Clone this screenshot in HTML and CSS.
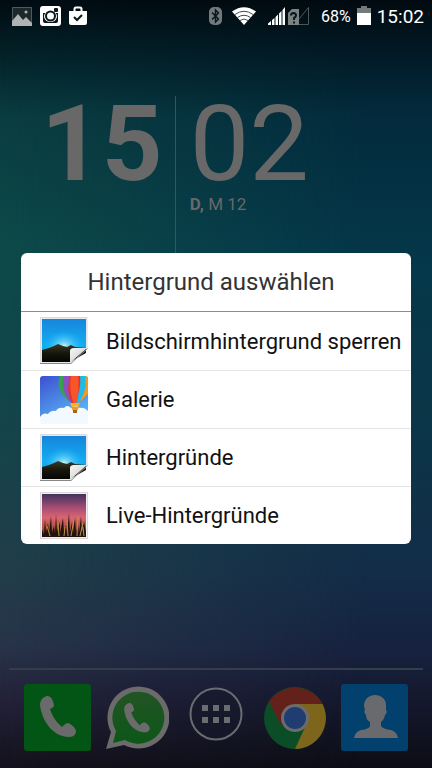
FILE: index.html
```html
<!DOCTYPE html>
<html lang="de">
<head>
    <meta charset="UTF-8">
    <meta name="viewport" content="width=device-width, initial-scale=1.0">
    <title>Hintergrund auswählen</title>
    <link rel="stylesheet" href="styles.css">
</head>
<body>
    <!-- shared drawings -->
    <svg class="defs" width="0" height="0" aria-hidden="true">
      <defs>
        <linearGradient id="sky" x1="0" y1="0" x2="0" y2="1">
          <stop offset="0" stop-color="#1785dc"/>
          <stop offset="0.6" stop-color="#12adf3"/>
          <stop offset="1" stop-color="#1fa3d6"/>
        </linearGradient>
        <radialGradient id="sun" cx="0.5" cy="0.5" r="0.5">
          <stop offset="0" stop-color="#d4f2ee"/>
          <stop offset="0.25" stop-color="#7fdcf8" stop-opacity="0.8"/>
          <stop offset="1" stop-color="#19b3f7" stop-opacity="0"/>
        </radialGradient>
        <linearGradient id="hill" x1="0" y1="0" x2="0" y2="1">
          <stop offset="0" stop-color="#3a3c22"/>
          <stop offset="0.5" stop-color="#17170d"/>
          <stop offset="1" stop-color="#050505"/>
        </linearGradient>
        <linearGradient id="fold" x1="0" y1="0" x2="1" y2="1">
          <stop offset="0" stop-color="#f8f8f8"/>
          <stop offset="0.6" stop-color="#d9d9d9"/>
          <stop offset="1" stop-color="#bbb"/>
        </linearGradient>
        <linearGradient id="gallery-sky" x1="0" y1="0" x2="0.6" y2="1">
          <stop offset="0" stop-color="#3c4fd0"/>
          <stop offset="1" stop-color="#58b4f4"/>
        </linearGradient>
        <linearGradient id="dusk" x1="0" y1="0" x2="0" y2="1">
          <stop offset="0" stop-color="#40305c"/>
          <stop offset="0.3" stop-color="#a04c73"/>
          <stop offset="0.55" stop-color="#dc6470"/>
          <stop offset="0.8" stop-color="#a8503f"/>
          <stop offset="1" stop-color="#3a2018"/>
        </linearGradient>
        <linearGradient id="wa-green" x1="0" y1="0" x2="0" y2="1">
          <stop offset="0" stop-color="#235425"/>
          <stop offset="1" stop-color="#0c5717"/>
        </linearGradient>
        <symbol id="wallpaper" viewBox="0 0 48 48">
          <path d="M0.500 0.500H47V32L31 46.500H0.500Z" fill="#e9e9e9" stroke="#dcdcdc"/>
          <path d="M0 46.500H31" stroke="#888"/>
          <path d="M2 2H46V32H30V45H2Z" fill="url(#sky)"/>
          <ellipse cx="24" cy="29" rx="20" ry="16" fill="url(#sun)"/>
          <path d="M2 45V33L9 31L14 29L18 27L23 29L27 30L31 28L35 30L46 31V36L30 45Z" fill="url(#hill)"/>
          <path d="M30 46V34Q30 31 34 31L47 31Z" fill="url(#fold)"/>
          <path d="M31 46.500L47.500 31.500" stroke="#999"/>
        </symbol>
        <symbol id="handset" viewBox="0 0 36 42">
          <path d="M7 0C3 1 0 4 0 9C2 26 14 41 29 41C34 41 36 38 36 35C35 31 31 28 28 27C26 27 24 29 22 31C17 27 12 20 10 13C13 12 14 10 14 9C13 5 12 2 10 1C9 0 8 0 7 0Z"/>
        </symbol>
      </defs>
    </svg>

    <header class="statusbar">
      <div class="group notices">
        <svg width="20" height="20" viewBox="0 0 20 20" aria-label="Bild">
          <path d="M0 1H20V20H0Z" fill="#1c282b"/>
          <path d="M0.500 18V1.500H19.500V18" fill="none" stroke="#50595c"/>
          <path d="M0 20V15L6 8L11 14L14 11L20 17V20Z" fill="#b0b3b4"/>
          <circle cx="14" cy="6" r="1.500" fill="#b0b3b4"/>
        </svg>
        <svg width="21" height="20" viewBox="0 0 21 20" aria-label="Instagram">
          <rect width="21" height="20" rx="3" fill="#fff"/>
          <path d="M3 7H5.500A5.500 5.500 0 0 0 10.500 16A5.500 5.500 0 0 0 15.500 7H18V15Q18 17 16 17H5Q3 17 3 15Z" fill="#07191e"/>
          <circle cx="10.500" cy="10" r="6" fill="#fff"/>
          <circle cx="10.500" cy="10" r="4.500" fill="none" stroke="#07191e" stroke-width="2"/>
          <rect x="14" y="2" width="4" height="4" rx="1" fill="#07191e"/>
        </svg>
        <svg width="18" height="20" viewBox="0 0 18 20" aria-label="Play Store">
          <path d="M5.500 5V3Q5.500 1.500 7 1.500H11Q12.500 1.500 12.500 3V5" fill="none" stroke="#fff" stroke-width="2"/>
          <path d="M0 5H18V17Q18 19 16 19H2Q0 19 0 17Z" fill="#fff"/>
          <path d="M5 11L8 14L13 9" fill="none" stroke="#07191e" stroke-width="2"/>
        </svg>
      </div>
      <div class="group system">
        <svg width="13" height="20" viewBox="0 0 13 20" aria-label="Bluetooth">
          <rect y="1" width="13" height="18" rx="5" fill="#737a7c"/>
          <path d="M3 6.500L9.500 13L6.500 16V4L9.500 7L3 13.500" fill="none" stroke="#07191e" stroke-width="1.500"/>
        </svg>
        <svg class="wifi" width="24" height="20" viewBox="0 0 24 20" aria-label="WLAN">
          <path d="M0 5.500Q12 -3 24 5.500L12 19Z" fill="#fff"/>
          <path d="M3 8.500Q12 2 21 8.500M5.500 11.500Q12 7 18.500 11.500M8 14.500Q12 11.500 16 14.500" fill="none" stroke="#3d4b4f" stroke-width="1"/>
        </svg>
        <svg class="signal" width="41" height="20" viewBox="0 0 41 20" aria-label="Signal">
          <path d="M0 19V17.500L3 15V19ZM4 19V14L6.500 12V19ZM7.500 19V11L10 8.500V19ZM11 19V7.500L13.500 5V19ZM14.500 19V4L17 1V19Z" fill="#fff"/>
          <path d="M20 19V7L24 3H31V19Z" fill="#7c8385"/>
          <path d="M31 18.500H40.500V1.500L31 13" fill="none" stroke="#4b575a"/>
          <path d="M23 9.500Q23 7 25.500 7Q28 7 28 9.500Q28 11 26 12V14M26 15.500V17.500" fill="none" stroke="#07191e" stroke-width="2"/>
        </svg>
        <span class="percent">68%</span>
        <svg width="14" height="20" viewBox="0 0 14 20" aria-label="Akku">
          <path d="M4 0H10V2H14V8H0V2H4Z" fill="#737a7c"/>
          <path d="M0 7H14V19H0Z" fill="#fff"/>
        </svg>
        <time class="time">15:02</time>
      </div>
    </header>

    <main class="home">
      <section class="clock">
        <div class="hours">15</div>
        <div class="right">
          <div class="minutes">02</div>
          <div class="date"><b>D,</b> M 12</div>
        </div>
      </section>
    </main>

    <nav class="dock">
      <a href="#telefon" aria-label="Telefon">
        <svg width="67" height="67" viewBox="0 0 67 67">
          <rect width="67" height="67" rx="3" fill="#035516"/>
          <use href="#handset" x="16" y="12" width="36" height="42" fill="#6a6a6a"/>
        </svg>
      </a>
      <a href="#whatsapp" aria-label="WhatsApp">
        <svg width="64" height="64" viewBox="0 0 64 64">
          <path d="M1 63L6 46A31 31 0 1 1 19 59Z" fill="#6b6b6b"/>
          <path d="M8 57L11 45A26 26 0 1 1 20 54Z" fill="url(#wa-green)"/>
          <use href="#handset" x="16" y="17" width="32" height="30" fill="#6b6b6b"/>
        </svg>
      </a>
      <a href="#apps" aria-label="Apps">
        <svg class="apps" width="54" height="54" viewBox="0 0 54 54">
          <circle cx="27" cy="27" r="25.500" fill="#15182a" fill-opacity="0.5" stroke="#6a6c72" stroke-width="2"/>
          <path d="M13 18h6v6h-6zM24 18h6v6h-6zM35 18h6v6h-6zM13 30h6v6h-6zM24 30h6v6h-6zM35 30h6v6h-6z" fill="#6a6c70"/>
        </svg>
      </a>
      <a href="#chrome" aria-label="Chrome">
        <svg width="62" height="62" viewBox="0 0 62 62">
          <circle cx="31" cy="31" r="31" fill="#0a4d26"/>
          <path d="M31 17H58.500A31 31 0 0 1 31 62L42 38Z" fill="#7d651c"/>
          <path d="M5 15A31 31 0 0 1 58.500 17H31L17 38Z" fill="#64201a"/>
          <circle cx="31" cy="31" r="14" fill="#6b6b6b"/>
          <circle cx="31" cy="31" r="11" fill="#203d71"/>
        </svg>
      </a>
      <a href="#kontakte" aria-label="Kontakte">
        <svg width="67" height="67" viewBox="0 0 67 67">
          <rect width="67" height="67" rx="3" fill="#02406e"/>
          <path d="M34 11C41 11 46 16 45 23L45 26Q47 28 44 31Q43 36 40 38V42Q42 45 50 46Q56 48 57 54H13Q14 48 20 46Q28 45 29 42V38Q25 36 25 31Q22 28 24 26L23 22C23 16 27 11 34 11Z" fill="#686a6d"/>
        </svg>
      </a>
    </nav>

    <div class="overlay">
      <div class="dialog" role="dialog" aria-labelledby="dialog-title">
        <h1 id="dialog-title">Hintergrund auswählen</h1>
        <ul>
          <li><button type="button">
            <svg width="48" height="48" aria-hidden="true"><use href="#wallpaper"/></svg>
            Bildschirmhintergrund sperren
          </button></li>
          <li><button type="button">
            <svg width="48" height="48" viewBox="0 0 48 48" aria-hidden="true">
              <path d="M0 44V3Q0 0 3 0H45Q48 0 48 3V44Z" fill="url(#gallery-sky)"/>
              <path d="M20 0C16 10 20 19 32 27L34 26L28 0Z" fill="#35a34b"/>
              <path d="M24 0C21 10 24 20 32 28L34 27L32 0Z" fill="#8a4fc0"/>
              <path d="M30 0C27 10 28 21 33 28H36L42 0Z" fill="#e63223"/>
              <path d="M31 0C29 10 31 21 34 28H36Q40 12 38 0Z" fill="#f8552a"/>
              <path d="M40 0C41 10 39 20 36 28L39 26C45 16 47 8 46 0Z" fill="#1dbbe8"/>
              <path d="M45 0Q48 0 48 3V18L38 27C45 18 47 9 45 0Z" fill="#f19a20"/>
              <path d="M30 27H40L38 32H32Z" fill="#f8b32c"/>
              <path d="M0 46V41Q3 36 8 38Q11 34 16 35Q18 31 24 32Q27 28 31 32Q36 29 40 32Q44 31 48 35V46Q48 48 46 48H2Q0 48 0 46Z" fill="#f2faff"/>
              <path d="M31 31H39L37 35H33Z" fill="#ef9b21"/>
              <path d="M33 34H37V37H33Z" fill="#a6631c"/>
            </svg>
            Galerie
          </button></li>
          <li><button type="button">
            <svg width="48" height="48" aria-hidden="true"><use href="#wallpaper"/></svg>
            Hintergründe
          </button></li>
          <li><button type="button">
            <svg width="48" height="48" viewBox="0 0 48 48" aria-hidden="true">
              <rect x="0.500" y="0.500" width="47" height="46" fill="#eee" stroke="#dcd6d6"/>
              <rect x="2" y="2" width="44" height="43" fill="url(#dusk)"/>
              <path d="M2 45V38L4 43L5 27L6 41L8 31L9 42L11 24L12 41L14 34L15 42L16 22L17 40L20 30L20 42L23 26L24 41L26 33L27 43L29 21L30 41L32 30L33 42L35 25L36 41L38 32L39 42L41 24L42 41L44 29L46 41V45Z" fill="#1f120f"/>
              <path d="M19 44L18 31M28 44L27 28M31 44L34 27M37 44L38 24M40 44L43 31M44 44L43 35M24 44L25 35M10 44L7 34" fill="none" stroke="#bd923a"/>
            </svg>
            Live-Hintergründe
          </button></li>
        </ul>
      </div>
    </div>
</body>
</html>
```

FILE: styles.css
```css
*{
  box-sizing: border-box;
}
body{
  margin: 0;
  min-height: 100vh;
  display: flex;
  flex-direction: column;
  position: relative;
  font-family: Roboto, "Noto Sans", sans-serif;
  color: white;
  background: linear-gradient(#010c12, #04252b 8%, #0a3d40 15%, #0e4a49 32%, #12464a 52%, #223d49 75%, #283449 84%, #23223a 91%, #14121c);
}
/* cooler right side of the wallpaper, fading in from the left */
body::before{
  content: "";
  position: absolute;
  inset: 0;
  z-index: -1;
  background: linear-gradient(#010a10, #021c29 8%, #032b3d 15%, #04384a 35%, #0b3648 55%, #132c47 75%, #17213e 85%, #14172b 92%, #0c0d15);
  -webkit-mask-image: linear-gradient(to right, transparent, black 85%);
  mask-image: linear-gradient(to right, transparent, black 85%);
}
.defs{
  position: absolute;
}
svg{
  display: block;
  flex: none;
}

.statusbar{
  height: 32px;
  padding: 0 8px 0 12px;
  display: flex;
  justify-content: space-between;
  align-items: center;
}
.group{
  display: flex;
  align-items: center;
  gap: 8px;
}
.system{
  gap: 6px;
}
.wifi{
  margin: 0 6px 0 4px;
}
.signal{
  margin-right: 6px;
}
.percent{
  font-size: 16px;
}
.time{
  font-size: 19px;
}

.home{
  flex: 1;
  padding: 64px 41px 0;
}
.clock{
  display: flex;
  color: #686868;
}
.hours, .minutes{
  font-size: 106px;
  line-height: 96px;
}
.hours{
  font-weight: bold;
  padding-right: 12px;
}
.right{
  padding: 0 0 40px 14px;
  border-left: 1px solid #2c5a5e;
}
.date{
  font-size: 17px;
  line-height: 24px;
}

.dock{
  margin: 0 9px;
  padding: 14px 9px 17px;
  border-top: 2px solid #343d4a;
  display: grid;
  grid-template-columns: repeat(5, 1fr);
  justify-items: center;
  align-items: center;
}
.apps{
  margin-bottom: 8px;
}

.overlay{
  position: absolute;
  inset: 0;
  padding: 29px 21px 0;
  display: flex;
  align-items: center;
}
.dialog{
  flex: 1;
  background: white;
  border-radius: 6px;
  overflow: hidden;
}
.dialog h1{
  margin: 0;
  padding-right: 10px;
  font-size: 24px;
  font-weight: normal;
  line-height: 58px;
  text-align: center;
  color: #333;
  border-bottom: 1px solid #8c8c8c;
}
.dialog ul{
  list-style: none;
  margin: 0;
  padding: 0;
}
.dialog li + li{
  border-top: 1px solid #e4e4e4;
}
.dialog button{
  width: 100%;
  height: 58px;
  padding: 0 0 0 19px;
  display: flex;
  align-items: center;
  gap: 18px;
  border: 0;
  background: none;
  font-family: inherit;
  font-size: 22px;
  white-space: nowrap;
  color: #111;
}
.dialog li + li button{
  height: 57px;
}
```
